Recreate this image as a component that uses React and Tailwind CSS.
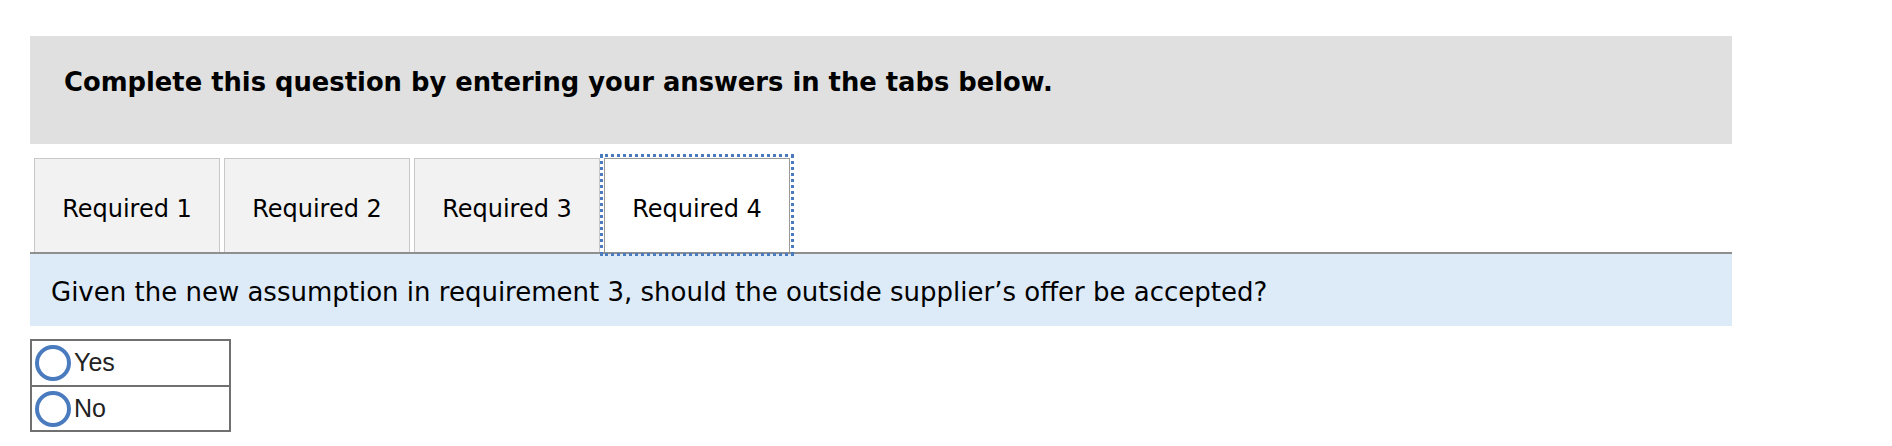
export default function App() {
  const tabs = ["Required 1", "Required 2", "Required 3", "Required 4"];
  return (
    <div className="w-[1892px] h-[446px] bg-white font-['DejaVu_Sans',Verdana,sans-serif] text-black">
      <div className="ml-[30px] pt-[36px] w-[1702px]">
        <div className="bg-[#e0e0e0] h-[108px] pl-[34px] pt-[31px]">
          <h2 className="text-[25.8px] leading-[30px] font-bold">
            Complete this question by entering your answers in the tabs below.
          </h2>
        </div>
        <div className="mt-[14px] flex gap-[4px] pl-[4px] border-b-2 border-[#8f8f8f]">
          {tabs.map((t, i) =>
            i === 3 ? (
              <div
                key={t}
                className="w-[186px] h-[94px] pt-[6px] flex items-center justify-center bg-white border border-b-0 border-[#999999] text-[24px] outline-[3px] outline-dotted outline-[#4a7bbf] outline-offset-[1px]"
              >
                {t}
              </div>
            ) : (
              <div
                key={t}
                className="w-[186px] h-[94px] pt-[6px] flex items-center justify-center bg-[#f2f2f2] border border-b-0 border-[#c8c8c8] text-[24px]"
              >
                {t}
              </div>
            )
          )}
        </div>
        <div className="bg-[#ddeaf7] h-[72px] pt-[4px] flex items-center pl-[21px] text-[26px]">
          Given the new assumption in requirement 3, should the outside supplier’s offer be accepted?
        </div>
        <div className="mt-[13px] w-[201px] border-2 border-[#707070] font-['Liberation_Sans',Arial,sans-serif] text-[25px] text-[#222]">
          {["Yes", "No"].map((o, i) => (
            <div
              key={o}
              className={
                "flex items-center " + (i === 0 ? "h-[46px] border-b-2 border-[#707070]" : "h-[43px]")
              }
            >
              <span className="ml-[3px] w-[36px] h-[36px] rounded-full border-4 border-[#4a7bbf] bg-white shrink-0" />
              <span className="ml-[3px]">{o}</span>
            </div>
          ))}
        </div>
      </div>
    </div>
  );
}
